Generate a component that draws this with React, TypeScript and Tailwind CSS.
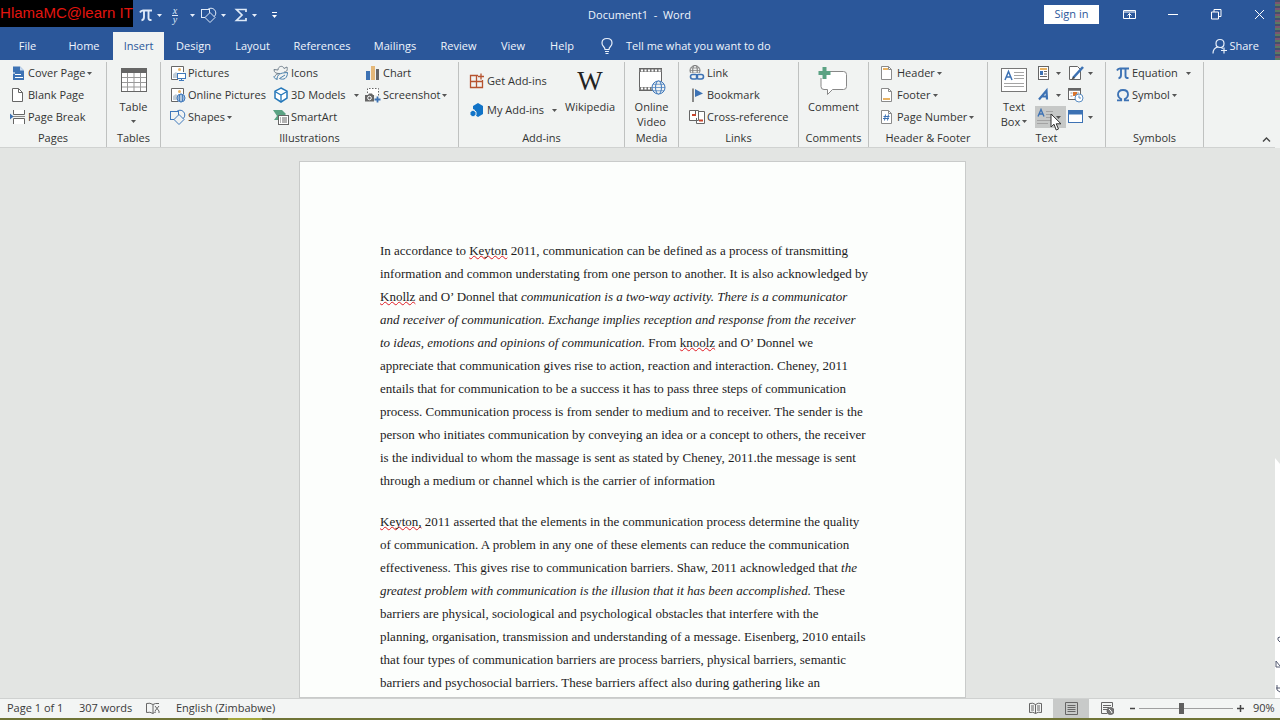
import React from 'react';

type Kids = { children?: React.ReactNode };

function Svg({ w = 16, h = 16, children }: Kids & { w?: number; h?: number }) {
  return (
    <svg width={w} height={h} viewBox={`0 0 ${w} ${h}`} fill="none" stroke="#666" strokeWidth="1" className="shrink-0" aria-hidden="true">
      {children}
    </svg>
  );
}

function Caret({ light = false }: { light?: boolean }) {
  return (
    <svg width="5" height="3" viewBox="0 0 5 3" className="shrink-0" aria-hidden="true">
      <path d="M0 0h5L2.5 3z" fill={light ? '#e6eefa' : '#555'} />
    </svg>
  );
}

/* ---------- icons ---------- */

const globe = (cx: number, cy: number, r: number, c = '#3f78bb') => (
  <g stroke={c} fill="#f1f3f2">
    <circle cx={cx} cy={cy} r={r} />
    <ellipse cx={cx} cy={cy} rx={r / 2.2} ry={r} />
    <path d={`M${cx - r} ${cy}h${2 * r}M${cx - r + 1} ${cy - r / 2}h${2 * r - 2}M${cx - r + 1} ${cy + r / 2}h${2 * r - 2}`} strokeWidth=".7" />
  </g>
);

const CoverPageIcon = () => (
  <Svg>
    <path d="M3 1.500h7l4 4V15H3z" fill="#3d72b4" stroke="none" />
    <path d="M10 1.500v4h4z" fill="#c6d8ee" stroke="none" />
    <path d="M2 8h3M5 9.500h6M5 12.500h8" stroke="#fff" />
  </Svg>
);
const BlankPageIcon = () => (
  <Svg>
    <path d="M2.500 1.500h6l4 4v9h-10z" fill="#fff" />
    <path d="M8.500 1.500v4h4" />
  </Svg>
);
const PageBreakIcon = () => (
  <Svg>
    <path d="M3.500 1v4.500h11V1M3.500 15v-5.500h11V15" fill="#fff" />
    <path d="M3 7.500h12" stroke="#888" />
    <path d="M0 4.500l3.500 3L0 10.500z" fill="#3d72b4" stroke="none" />
  </Svg>
);
const TableIcon = () => (
  <Svg w={28} h={26}>
    <rect x="1.500" y="1.500" width="25" height="23" fill="#fff" />
    <rect x="1" y="1" width="26" height="5" fill="#666" stroke="none" />
    <path d="M7.500 6v18M14 6v18M20.500 6v18M2 10.500h24M2 15.500h24M2 20h24" stroke="#999" />
  </Svg>
);
const picture = (
  <g>
    <path d="M13.500 7V1.500h-12v13H8" fill="#fff" />
    <circle cx="9.500" cy="4.500" r="1.500" fill="#eab464" stroke="none" />
    <path d="M3 13V9l3-2 3 3v3z" fill="#c2cdd6" stroke="none" />
  </g>
);
const PicturesIcon = () => (
  <Svg>
    {picture}
    <rect x="7.500" y="8.500" width="8" height="5" fill="#fff" stroke="#3f78bb" />
    <path d="M11.500 13.500v2M9 15.500h5" stroke="#3f78bb" />
  </Svg>
);
const OnlinePicturesIcon = () => (
  <Svg>
    {picture}
    {globe(11, 11, 4)}
  </Svg>
);
const ShapesIcon = ({ c = '#3f78bb', bg = '#f1f3f2' }: { c?: string; bg?: string }) => (
  <Svg>
    <circle cx="10" cy="6" r="4.800" stroke={c} />
    <rect x=".5" y="2.500" width="8" height="8" stroke={c} fill={bg} />
    <path d="M9 5.500l5 5-5 5-5-5z" fill={bg} stroke={c} />
  </Svg>
);
const IconsIcon = () => (
  <Svg>
    <path d="M1 4.500L5 5c0-4 5-5 6-1.500L14 2c1 4-1 5-3 5M1 4.500c0 3 2 4 5 4M2 11.500c0-2 3-3 5-3" stroke="#72808c" />
    <path d="M4 15c0-6 3-7 10.500-7.500C14.500 13 11 15.500 6.500 13.500L12 10M1 11c0 2 1 3 3 3" stroke="#4b81ad" />
  </Svg>
);
const ModelsIcon = () => (
  <Svg>
    <path d="M8 1l6 3.200v7L8 15l-6-3.800v-7z" fill="#fff" stroke="#2678ba" strokeWidth="1.500" />
    <path d="M2 4.500l6 3.500 6-3.500M8 8v7" stroke="#2678ba" strokeWidth="1.300" />
  </Svg>
);
const SmartArtIcon = () => (
  <Svg>
    <path d="M0 1h9l4 4-1 1H5v5H1l3-4z" fill="#5ba283" stroke="none" />
    <rect x="5.500" y="6.500" width="10" height="9" fill="#fff" />
    <path d="M7 9h1M9 9h5M7 11h1M9 11h5M7 13h1M9 13h5" />
  </Svg>
);
const ChartIcon = () => (
  <Svg>
    <g stroke="none">
      <rect x="1" y="6" width="4" height="9" fill="#3d72b4" />
      <rect x="6" y="1" width="4" height="14" fill="#e5b878" />
      <rect x="11" y="4" width="3" height="11" fill="#666" />
    </g>
  </Svg>
);
const ScreenshotIcon = () => (
  <Svg>
    <path d="M2.500 6V1.500h11V9" strokeDasharray="1.500 1.500" fill="#fff" />
    <path d="M0 8h3l1-1.500h3L8 8h1v6.500H0z" fill="#666" stroke="none" />
    <circle cx="4.500" cy="11" r="1.800" fill="#666" stroke="#fff" />
    <path d="M12.500 9.500v6M9.500 12.500h6" stroke="#3d72b4" strokeWidth="1.800" />
  </Svg>
);
const GetAddinsIcon = () => (
  <Svg>
    <path d="M9 2.500H1.500v12h12V7M7.500 2.500v12M1.500 8.500h12" stroke="#b6532f" strokeWidth="1.300" />
    <path d="M12 .5v6M9 3.500h6" stroke="#b6532f" strokeWidth="1.300" />
  </Svg>
);
const MyAddinsIcon = () => (
  <Svg>
    <path d="M9 1l5 3v8l-5 3-3-2V8L4 7V4z" fill="#1173c7" stroke="none" />
    <path d="M4 8l3 1.800v3.400L4 15l-3-1.800V9.800z" fill="#1173c7" stroke="#f1f3f2" />
  </Svg>
);
const VideoIcon = () => (
  <Svg w={28} h={28}>
    <rect x="1.500" y="1.500" width="22" height="22" fill="#fff" />
    <path d="M1 3.500h23M1 21.500h16" stroke="#777" strokeWidth="3" />
    <path d="M3 3.500h20M3 21.500h14" stroke="#fff" strokeWidth="2" strokeDasharray="2 1.500" />
    {globe(20.5, 20.5, 6.5)}
  </Svg>
);
const LinkIcon = () => (
  <Svg>
    {globe(6, 5.5, 5, '#777')}
    <path d="M0 8h16v8H0z" fill="#f1f3f2" stroke="none" />
    <rect x="1.500" y="9.500" width="7" height="4.500" rx="2.200" stroke="#3d72b4" strokeWidth="1.600" />
    <rect x="7.500" y="9.500" width="7" height="4.500" rx="2.200" stroke="#3d72b4" strokeWidth="1.600" />
  </Svg>
);
const BookmarkIcon = () => (
  <Svg>
    <path d="M4 1.500V15" strokeWidth="1.500" />
    <path d="M6 2l8 4.500L6 10z" fill="#3d72b4" stroke="none" />
  </Svg>
);
const CrossRefIcon = () => (
  <Svg>
    <path d="M.5 1.500h9v10h-9zM6.500 6V1.500M10 2.500h5.500v12h-8V9" fill="#fff" />
    <path d="M3 6h4M10 11.500h4" stroke="#c8452d" strokeWidth="2" />
  </Svg>
);
const CommentIcon = () => (
  <Svg w={30} h={28}>
    <path d="M8 4.500h17.500q3 0 3 3v12q0 3-3 3h-11l-5 5v-5H6q-3 0-3-3V11" fill="#fff" stroke="#888" />
    <path d="M6.500 0v12M.5 6h12" stroke="#5ba283" strokeWidth="4" />
  </Svg>
);
const pageShape = (
  <g>
    <path d="M2.500 1.500h7l3 3v10h-10z" fill="#fff" stroke="#8a8a8a" />
    <path d="M9.500 1.500v3h3" stroke="#8a8a8a" />
  </g>
);
const HeaderIcon = () => (
  <Svg>{pageShape}<path d="M4 4h5" stroke="#e8b262" strokeWidth="2" /></Svg>
);
const FooterIcon = () => (
  <Svg>{pageShape}<path d="M4 12h7" stroke="#e8b262" strokeWidth="2" /></Svg>
);
const PageNumberIcon = () => (
  <Svg>{pageShape}<path d="M6.500 5.500l-1 6M9.500 5.500l-1 6M4.500 7.500h6M4 9.500h6" stroke="#3d72b4" /></Svg>
);
const TextBoxIcon = () => (
  <Svg w={28} h={26}>
    <rect x="1.500" y="1.500" width="25" height="23" fill="#fff" stroke="#777" />
    <path d="M5 13l3.500-8.500L12 13M6.200 10h4.600" stroke="#3d72b4" strokeWidth="1.500" />
    <path d="M14 5.500h10M14 8.500h10M14 11.500h10M4 16.500h20M4 19.500h20" stroke="#a5a5a5" />
  </Svg>
);
const QuickPartsIcon = () => (
  <Svg>
    <rect x="2.500" y="1.500" width="10" height="13" fill="#fff" />
    <rect x="4" y="3" width="7" height="2" fill="#e8b262" stroke="none" />
    <rect x="4" y="6" width="3" height="4" fill="#3d72b4" stroke="none" />
    <path d="M8 6.500h3M8 9h3M4 11.500h7" />
  </Svg>
);
const SignatureIcon = () => (
  <Svg>
    <path d="M1.500 1.500h8l3 3v10h-11z" fill="#fff" />
    <path d="M15 2L5 13" stroke="#3d72b4" strokeWidth="2.600" />
    <path d="M5.500 11.500L3 15l4-2z" fill="#444" stroke="none" />
  </Svg>
);
const WordArtIcon = () => (
  <Svg>
    <path d="M3 12.500L10.500 3.500 11 12.500M6 9.500h5" stroke="#3d72b4" strokeWidth="2.200" />
  </Svg>
);
const DateIcon = () => (
  <Svg>
    <rect x=".5" y="1.500" width="12" height="11" fill="#fff" />
    <path d="M0 2.500h13" strokeWidth="2.500" />
    <path d="M2.500 6h2M2.500 9h2M9 6h2" stroke="#999" />
    <rect x="5" y="5" width="4" height="4" fill="#d9752e" stroke="none" />
    <circle cx="11" cy="11" r="4" fill="#fff" stroke="#5b8ec4" />
    <path d="M11 8.500V11h2" stroke="#5b8ec4" />
  </Svg>
);
const DropCapIcon = () => (
  <Svg w={18} h={18}>
    <path d="M2 8.500l3-7L8 8.500M3.200 6h3.800" stroke="#3d72b4" strokeWidth="1.400" />
    <path d="M10 3.500h7M10 6.500h7M10 9.500h7M1 12.500h16M1 15.500h11" stroke="#a3a3a3" />
  </Svg>
);
const ObjectIcon = () => (
  <Svg>
    <rect x=".5" y="1.500" width="14" height="12" fill="#fff" stroke="#3d72b4" />
    <path d="M0 3.500h15" stroke="#3d72b4" strokeWidth="4" />
  </Svg>
);
const PiIcon = ({ c = '#3d72b4' }: { c?: string }) => (
  <Svg w={14} h={14}>
    <path d="M1 4.500Q2 2.500 4 2.500h9" stroke={c} strokeWidth="2" />
    <path d="M5 3v6q0 3-2.500 3.200M9.500 3v7q0 2.200 3 2" stroke={c} strokeWidth="1.900" />
  </Svg>
);
const OmegaIcon = () => (
  <Svg w={14} h={14}>
    <path d="M1 12.300h4.200V11Q2 9.300 2 6.400 2 2 7 2t5 4.400Q12 9.300 8.800 11v1.300H13" stroke="#3d72b4" strokeWidth="1.800" />
  </Svg>
);

/* ---------- ribbon parts ---------- */

function Cmd({ icon, label, caret, far }: { icon: React.ReactNode; label: string; caret?: boolean; far?: boolean }) {
  return (
    <button type="button" className={`flex h-[22px] items-center whitespace-nowrap ${far ? 'gap-2' : 'gap-[2px]'}`}>
      <span className="flex items-center gap-[2px]">
        {icon}
        <span>{label}</span>
      </span>
      {caret && <Caret />}
    </button>
  );
}

function IconCmd({ icon, label, caret = true, on = false }: { icon: React.ReactNode; label: string; caret?: boolean; on?: boolean }) {
  return (
    <button type="button" aria-label={label} className={`flex h-[22px] w-[31px] items-center ${on ? 'gap-[2px] bg-[#c6c8c7] pl-px' : 'gap-1 pl-px'}`}>
      {icon}
      {caret && <Caret />}
    </button>
  );
}

function Big({ icon, lines, caret }: { icon: React.ReactNode; lines: string[]; caret?: 'below' | 'inline' }) {
  return (
    <button type="button" className="flex flex-col items-center pt-[5px] leading-[15px]">
      <span className="flex h-[32px] items-start">{icon}</span>
      {lines.map((l, i) => (
        <span key={l} className="flex items-center gap-[2px] whitespace-nowrap">
          {l}
          {caret === 'inline' && i === lines.length - 1 && <Caret />}
        </span>
      ))}
      {caret === 'below' && <span className="flex h-[14px] items-center"><Caret /></span>}
    </button>
  );
}

function Group({ name, width, pad, children }: Kids & { name: string; width: string; pad: string }) {
  return (
    <section aria-label={name} className={`flex shrink-0 flex-col border-r border-[#bfc1c0] ${width}`}>
      <div className={`flex h-[67px] shrink-0 items-start ${pad}`}>{children}</div>
      <h2 className="text-center leading-[18px]">{name}</h2>
    </section>
  );
}

const tabs: [string, string][] = [
  ['File', 'w-[55px]'],
  ['Home', 'w-[58px]'],
  ['Insert', 'w-[51px]'],
  ['Design', 'w-[59px]'],
  ['Layout', 'w-[59px]'],
  ['References', 'w-[80px]'],
  ['Mailings', 'w-[66px]'],
  ['Review', 'w-[61px]'],
  ['View', 'w-[48px]'],
  ['Help', 'w-[50px]'],
];

function TitleBar() {
  return (
    <div className="flex h-8 items-start justify-between">
      <div className="flex flex-1 items-start">
        <span className="flex h-[27px] w-[133px] shrink-0 items-center justify-center bg-black font-['Liberation_Sans',sans-serif] text-[15px] whitespace-nowrap text-[#e3150f]">
          HlamaMC@learn IT
        </span>
        <div className="flex h-[30px] items-center gap-[6px] pl-[6px]">
          <button type="button" aria-label="Equation" className="flex items-center gap-1"><PiIcon c="#dfeaf8" /><Caret light /></button>
          <button type="button" aria-label="Fraction" className="flex items-center gap-2">
            <span className="flex w-[14px] flex-col items-center font-['Liberation_Serif',serif] text-[10px] leading-[8px] text-[#dfeaf8] italic">
              <span className="border-b border-[#dfeaf8] px-[1px]">x</span>
              <span>y</span>
            </span>
            <Caret light />
          </button>
          <button type="button" aria-label="Shapes" className="flex items-center gap-1"><ShapesIcon c="#dfeaf8" bg="#2b579a" /><Caret light /></button>
          <button type="button" aria-label="Sum" className="flex items-center gap-1 pl-[2px]">
            <Svg w={14} h={16}><path d="M12 5V2.500H2.500L8 8l-5.500 5.500H12V11" stroke="#dfeaf8" strokeWidth="1.700" /></Svg>
            <Caret light />
          </button>
          <button type="button" aria-label="Customize toolbar" className="pl-2">
            <Svg w={7} h={8}><path d="M1 1.500h5" stroke="#fff" /><path d="M1 4h5L3.500 7z" fill="#fff" stroke="none" /></Svg>
          </button>
        </div>
      </div>
      <h1 className="pt-[6px] pl-[14px] leading-[18px] whitespace-pre">Document1  -  Word</h1>
      <div className="flex flex-1 items-center justify-end pt-[5px] pr-[10px]">
        <button type="button" className="mr-[24px] h-[19px] w-[55px] bg-white text-[#2b579a]">Sign in</button>
        <button type="button" aria-label="Ribbon display options" className="mr-[32px]">
          <Svg w={13} h={11}><path d="M.5 1.500h12v8H.5zM1 3h11" stroke="#fff" /><path d="M6.500 9V4.500M4.500 6.500l2-2 2 2" stroke="#fff" /></Svg>
        </button>
        <button type="button" aria-label="Minimize" className="mr-[32px]">
          <Svg w={11} h={11}><path d="M0 5.500h10" stroke="#fff" /></Svg>
        </button>
        <button type="button" aria-label="Restore" className="mr-[32px]">
          <Svg w={11} h={11}><path d="M.5 3h7v7h-7zM3 3V.5h7v7H7.500" stroke="#fff" /></Svg>
        </button>
        <button type="button" aria-label="Close">
          <Svg w={11} h={11}><path d="M1 1l9 9M10 1l-9 9" stroke="#fff" /></Svg>
        </button>
      </div>
    </div>
  );
}

function TabBar() {
  return (
    <nav className="flex h-7 items-stretch">
      {tabs.map(([t, w]) => (
        <button
          key={t}
          type="button"
          className={`shrink-0 text-center ${w} ${t === 'Insert' ? 'bg-[#f1f3f2] text-[#2b579a]' : ''}`}
        >
          {t}
        </button>
      ))}
      <button type="button" className="ml-[13px] flex items-center gap-[12px]">
        <Svg w={14} h={18}>
          <path d="M5 12.500Q5 11 3.500 9.500 2 8 2 6q0-4.500 5-4.500T12 6q0 2-1.500 3.500T9 12.500zM5 14.500h4M5.500 16.500h3" stroke="#e8f0fb" strokeWidth="1.200" />
        </Svg>
        Tell me what you want to do
      </button>
      <button type="button" className="mr-4 ml-auto flex items-center gap-px">
        <Svg>
          <path d="M1 15.500q0-5.500 5-6.500M8 1.500q4 0 4 4t-4 4-4-4 4-4zM9 9.500l2 1M12 9.500v6M9 12.500h6" stroke="#e8f0fb" strokeWidth="1.200" />
        </Svg>
        Share
      </button>
    </nav>
  );
}

function Ribbon() {
  return (
    <div className="flex h-[88px] shrink-0 border-b border-[#d0d2d1] bg-[#f1f3f2] pt-[2px] text-[#333]">
      <Group name="Pages" width="w-[107px]" pad="pl-[10px]">
        <div>
          <Cmd icon={<CoverPageIcon />} label="Cover Page" caret />
          <Cmd icon={<BlankPageIcon />} label="Blank Page" />
          <Cmd icon={<PageBreakIcon />} label="Page Break" />
        </div>
      </Group>
      <Group name="Tables" width="w-[54px]" pad="justify-center">
        <Big icon={<TableIcon />} lines={['Table']} caret="below" />
      </Group>
      <Group name="Illustrations" width="w-[298px]" pad="pl-[9px]">
        <div className="w-[103px]">
          <Cmd icon={<PicturesIcon />} label="Pictures" />
          <Cmd icon={<OnlinePicturesIcon />} label="Online Pictures" />
          <Cmd icon={<ShapesIcon />} label="Shapes" caret />
        </div>
        <div className="w-[92px]">
          <Cmd icon={<IconsIcon />} label="Icons" />
          <Cmd icon={<ModelsIcon />} label="3D Models" caret far />
          <Cmd icon={<SmartArtIcon />} label="SmartArt" />
        </div>
        <div>
          <Cmd icon={<ChartIcon />} label="Chart" />
          <Cmd icon={<ScreenshotIcon />} label="Screenshot" caret />
        </div>
      </Group>
      <Group name="Add-ins" width="w-[166px]" pad="pl-[10px]">
        <div className="flex w-[96px] flex-col gap-[7px] pt-[8px]">
          <Cmd icon={<GetAddinsIcon />} label="Get Add-ins" />
          <Cmd icon={<MyAddinsIcon />} label="My Add-ins" caret far />
        </div>
        <Big icon={<span className="font-['Liberation_Serif',serif] text-[27px] leading-[28px] text-[#222]">W</span>} lines={['Wikipedia']} />
      </Group>
      <Group name="Media" width="w-[54px]" pad="justify-center">
        <Big icon={<VideoIcon />} lines={['Online', 'Video']} />
      </Group>
      <Group name="Links" width="w-[120px]" pad="pl-[10px]">
        <div>
          <Cmd icon={<LinkIcon />} label="Link" />
          <Cmd icon={<BookmarkIcon />} label="Bookmark" />
          <Cmd icon={<CrossRefIcon />} label="Cross-reference" />
        </div>
      </Group>
      <Group name="Comments" width="w-[70px]" pad="justify-center">
        <Big icon={<CommentIcon />} lines={['Comment']} />
      </Group>
      <Group name="Header & Footer" width="w-[119px]" pad="pl-[10px]">
        <div>
          <Cmd icon={<HeaderIcon />} label="Header" caret />
          <Cmd icon={<FooterIcon />} label="Footer" caret />
          <Cmd icon={<PageNumberIcon />} label="Page Number" caret />
        </div>
      </Group>
      <Group name="Text" width="w-[118px]" pad="pl-[12px]">
        <Big icon={<TextBoxIcon />} lines={['Text', 'Box']} caret="inline" />
        <div className="ml-[7px]">
          <IconCmd icon={<QuickPartsIcon />} label="Quick Parts" />
          <IconCmd icon={<WordArtIcon />} label="WordArt" />
          <div className="relative">
            <IconCmd icon={<DropCapIcon />} label="Drop Cap" on />
            <svg width="12" height="18" viewBox="0 0 12 18" className="absolute top-[7px] left-[15px]" aria-hidden="true">
              <path d="M1 1v13l3-2.800L6.200 17l2.300-1-2.300-5.200H11z" fill="#fff" stroke="#333" />
            </svg>
          </div>
        </div>
        <div className="ml-px">
          <IconCmd icon={<SignatureIcon />} label="Signature Line" />
          <IconCmd icon={<DateIcon />} label="Date and Time" caret={false} />
          <IconCmd icon={<ObjectIcon />} label="Object" />
        </div>
      </Group>
      <Group name="Symbols" width="w-[98px]" pad="pl-[10px]">
        <div>
          <Cmd icon={<PiIcon />} label="Equation" caret far />
          <Cmd icon={<OmegaIcon />} label="Symbol" caret />
        </div>
      </Group>
      <button type="button" aria-label="Collapse the ribbon" className="mr-1 mb-[4px] ml-auto self-end">
        <Svg w={9} h={7}><path d="M1 5.500l3.500-3.500L8 5.500" stroke="#444" strokeWidth="1.400" /></Svg>
      </button>
    </div>
  );
}

const Typo = ({ children }: Kids) => (
  <span className="underline decoration-[#e01b24] decoration-wavy decoration-1 underline-offset-0 [text-decoration-skip-ink:none]">{children}</span>
);

function Page() {
  return (
    <article className="w-[667px] shrink-0 border border-[#c9cbca] bg-[#fcfefc] px-[80px] pt-[77px] font-['Liberation_Serif',serif] text-[13px] leading-[23px] whitespace-nowrap text-[#1c1c1c]">
      <p className="mb-[18px]">
        In accordance to <Typo>Keyton</Typo> 2011, communication can be defined as a process of transmitting<br />
        information and common understating from one person to another. It is also acknowledged by<br />
        <Typo>Knollz</Typo> and O’ Donnel that <em>communication is a two-way activity. There is a communicator</em><br />
        <em>and receiver of communication. Exchange implies reception and response from the receiver</em><br />
        <em>to ideas, emotions and opinions of communication.</em> From <Typo>knoolz</Typo> and O’ Donnel we<br />
        appreciate that communication gives rise to action, reaction and interaction. Cheney, 2011<br />
        entails that for communication to be a success it has to pass three steps of communication<br />
        process. Communication process is from sender to medium and to receiver. The sender is the<br />
        person who initiates communication by conveying an idea or a concept to others, the receiver<br />
        is the individual to whom the massage is sent as stated by Cheney, 2011.the message is sent<br />
        through a medium or channel which is the carrier of information
      </p>
      <p>
        <Typo>Keyton,</Typo> 2011 asserted that the elements in the communication process determine the quality<br />
        of communication. A problem in any one of these elements can reduce the communication<br />
        effectiveness. This gives rise to communication barriers. Shaw, 2011 acknowledged that <em>the</em><br />
        <em>greatest problem with communication is the illusion that it has been accomplished.</em> These<br />
        barriers are physical, sociological and psychological obstacles that interfere with the<br />
        planning, organisation, transmission and understanding of a message. Eisenberg, 2010 entails<br />
        that four types of communication barriers are process barriers, physical barriers, semantic<br />
        barriers and psychosocial barriers. These barriers affect also during gathering like an
      </p>
    </article>
  );
}

function StatusBar() {
  return (
    <footer className="flex h-[20px] shrink-0 items-stretch border-t border-[#cfd1d0] bg-[#f3f5f4] pr-[5px] pl-[7px] text-[#3a3a3a]">
      <div className="flex items-center">
        <span className="w-[72px]">Page 1 of 1</span>
        <span className="w-[67px]">307 words</span>
        <button type="button" aria-label="Proofing errors" className="w-[30px]">
          <Svg w={14} h={13}><path d="M7 2.500Q4 .5.500 1.500v9Q4 9.500 7 11.500V2.500Q9 1 13 1.500M7 11.500q1-1.500 3-1.500M9 4l4 5M13 4l-4 5M13 9v2" /></Svg>
        </button>
        <span>English (Zimbabwe)</span>
      </div>
      <div className="ml-auto flex items-stretch">
        <button type="button" aria-label="Read mode" className="flex w-[36px] items-center justify-center">
          <Svg w={13} h={13}><path d="M6.500 2.500Q4 .5.500 1.500v9q3.500-1 6 1 2.500-2 6-1v-9q-3.500-1-6 1v9M2 4h3M2 6h3M2 8h3M8 4h3M8 6h3M8 8h3" /></Svg>
        </button>
        <button type="button" aria-label="Print layout" className="flex w-[36px] items-center justify-center bg-[#c8cac9]">
          <Svg w={13} h={13}><path d="M.5.5h12v12H.5zM2.500 3.500h8M2.500 5.500h8M2.500 7.500h8M2.500 9.500h8" /></Svg>
        </button>
        <button type="button" aria-label="Web layout" className="flex w-[36px] items-center justify-center">
          <Svg w={13} h={13}><path d="M11.500 5V.5H.5v11H6M2 3.500h8M2 5.500h6M2 7.500h4" /><circle cx="9.500" cy="9" r="3.500" fill="#777" /><path d="M8 7l2 2 1 2" stroke="#fff" /></Svg>
        </button>
        <button type="button" aria-label="Zoom out" className="flex w-[14px] items-center justify-center"><Svg w={7} h={7}><path d="M1 3.500h5" stroke="#444" strokeWidth="1.500" /></Svg></button>
        <input
          type="range"
          aria-label="Zoom"
          min={10}
          max={190}
          defaultValue={90}
          className="w-[94px] appearance-none self-center bg-transparent [&::-webkit-slider-runnable-track]:h-px [&::-webkit-slider-runnable-track]:bg-[#a0a0a0] [&::-webkit-slider-thumb]:-mt-[5px] [&::-webkit-slider-thumb]:h-[11px] [&::-webkit-slider-thumb]:w-[5px] [&::-webkit-slider-thumb]:appearance-none [&::-webkit-slider-thumb]:bg-[#5f5f5f]"
        />
        <button type="button" aria-label="Zoom in" className="flex w-[14px] items-center justify-center"><Svg w={7} h={7}><path d="M0 3.500h7M3.500 0v7" stroke="#444" strokeWidth="1.500" /></Svg></button>
        <span className="ml-[6px] w-[22px] self-center whitespace-nowrap">90%</span>
      </div>
    </footer>
  );
}

/* Sliver of the window behind, visible along the right edge. */
function BackWindow() {
  return (
    <div className="flex w-[5px] shrink-0 flex-col" aria-hidden="true">
      <div className="h-[60px] bg-[repeating-linear-gradient(0deg,#5a7a62_0_2px,#7d5470_2px_4px,#45506b_4px_6px)]" />
      <div className="h-[88px] bg-[#f1f3f2]" />
      <div className="h-[310px] bg-[#e3e5e3]" />
      <div className="flex flex-1 flex-col justify-between bg-white">
        <Svg w={5} h={6}><path d="M0 0h5v6z" fill="#e3e5e3" stroke="none" /></Svg>
        <Svg w={5} h={66}><path d="M5 5q-3 0-2 3l2 2M1 35V29l4 5M1 35h4M2 53v5l3 2M1 56h4" stroke="#555b70" /></Svg>
      </div>
    </div>
  );
}

export default function App() {
  return (
    <div className="flex h-screen flex-col overflow-hidden bg-[#e3e5e3] font-['Open_Sans','Noto_Sans',sans-serif] text-[11px]">
      <div className="flex min-h-0 flex-1">
        <div className="flex min-w-0 flex-1 flex-col">
          <header className="h-[60px] shrink-0 bg-[#2b579a] text-[#f0f5fc]">
            <TitleBar />
            <TabBar />
          </header>
          <Ribbon />
          <main className="flex min-h-0 flex-1 justify-center overflow-hidden pt-[13px] pr-[10px]">
            <Page />
          </main>
        </div>
        <BackWindow />
      </div>
      <StatusBar />
      <div className="flex h-[2px] shrink-0 bg-[#6f7436]">
        <div className="ml-[228px] w-[34px] bg-[#a3a63a]" />
      </div>
    </div>
  );
}
